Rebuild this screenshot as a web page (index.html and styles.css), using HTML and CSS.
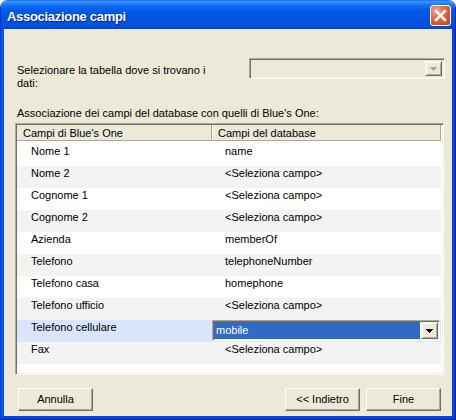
FILE: index.html
```html
<!DOCTYPE html>
<html lang="it">
<head>
<meta charset="utf-8">
<title>Associazione campi</title>
<link rel="stylesheet" href="styles.css">
</head>
<body>
<div class="window">
  <div class="titlebar">
    <span class="title">Associazione campi</span>
    <button class="close" aria-label="Chiudi">
      <svg width="19" height="19" viewBox="0 0 19 19"><path d="M5 5L14 14M14 5L5 14" stroke="#fff" stroke-width="2.6" stroke-linecap="square" fill="none"/></svg>
    </button>
  </div>
  <div class="client">
    <div class="select-row">
      <div class="select-label">Selezionare la tabella dove si trovano i dati:</div>
      <div class="combo disabled">
        <span class="combo-field"></span>
        <span class="combo-btn"><svg width="7" height="4" viewBox="0 0 7 4"><path d="M0 0h7v1H0zM1 1h5v1H1zM2 2h3v1H2zM3 3h1v1H3z" fill="#ACA899"/></svg></span>
      </div>
    </div>
    <div class="assoc-label">Associazione dei campi del database con quelli di Blue's One:</div>
    <div class="grid">
      <div class="grid-head">
        <div class="hcell c1">Campi di Blue's One</div>
        <div class="hcell c2">Campi del database</div>
      </div>
      <div class="grid-body">
        <div class="row"><div class="cell c1">Nome 1</div><div class="cell c2">name</div></div>
        <div class="row"><div class="cell c1">Nome 2</div><div class="cell c2">&lt;Seleziona campo&gt;</div></div>
        <div class="row"><div class="cell c1">Cognome 1</div><div class="cell c2">&lt;Seleziona campo&gt;</div></div>
        <div class="row"><div class="cell c1">Cognome 2</div><div class="cell c2">&lt;Seleziona campo&gt;</div></div>
        <div class="row"><div class="cell c1">Azienda</div><div class="cell c2">memberOf</div></div>
        <div class="row"><div class="cell c1">Telefono</div><div class="cell c2">telephoneNumber</div></div>
        <div class="row"><div class="cell c1">Telefono casa</div><div class="cell c2">homephone</div></div>
        <div class="row"><div class="cell c1">Telefono ufficio</div><div class="cell c2">&lt;Seleziona campo&gt;</div></div>
        <div class="row selected">
          <div class="cell c1">Telefono cellulare</div>
          <div class="cell c2 edit">
            <div class="combo edit-combo">
              <span class="combo-field sel">mobile</span>
              <span class="combo-btn"><svg width="7" height="4" viewBox="0 0 7 4"><path d="M0 0h7v1H0zM1 1h5v1H1zM2 2h3v1H2zM3 3h1v1H3z" fill="#000"/></svg></span>
            </div>
          </div>
        </div>
        <div class="row"><div class="cell c1">Fax</div><div class="cell c2">&lt;Seleziona campo&gt;</div></div>
      </div>
    </div>
    <div class="buttons">
      <button class="btn">Annulla</button>
      <span class="spacer"></span>
      <button class="btn">&lt;&lt; Indietro</button>
      <button class="btn">Fine</button>
    </div>
  </div>
</div>
</body>
</html>
```
FILE: styles.css
```css
* { box-sizing: border-box; }
html, body { margin: 0; padding: 0; background: #fff; }
body {
  font-family: "Liberation Sans", Arial, sans-serif;
  font-size: 11px;
  line-height: 13px;
  color: #000;
}
.window {
  width: 456px;
  height: 420px;
  display: flex;
  flex-direction: column;
  border-radius: 8px 8px 0 0;
  overflow: hidden;
  border-style: solid;
  border-width: 0 1px 1px 1px;
  border-color: #0831D9 #001EA0 #001EA0 #0831D9;
}
.titlebar {
  flex: none;
  height: 29px;
  display: flex;
  align-items: flex-start;
  padding: 0 4px 0 6px;
  background: linear-gradient(to bottom,
    #0A5AE6 0px, #3D95FF 1px, #2C88FC 3px, #1474F6 5px, #0864EC 8px,
    #0058E6 11px, #0054E3 18px, #0053E1 23px, #0050DC 26px, #0046D2 29px);
}
.title {
  font-weight: bold;
  font-size: 13px;
  letter-spacing: -0.3px;
  line-height: 16px;
  margin-top: 9px;
  color: #fff;
  text-shadow: 1px 1px 0 #0A1E8C;
}
.close {
  margin-left: auto;
  margin-top: 5px;
  width: 21px;
  height: 21px;
  padding: 0;
  border: 1px solid #fff;
  border-radius: 3px;
  background: radial-gradient(circle at 30% 25%, #F2A58C 0%, #E5714F 35%, #D5512C 70%, #C2401B 100%);
  display: flex;
  align-items: center;
  justify-content: center;
}
.close svg { display: block; }
.client {
  flex: 1;
  background: #ECE9D8;
  border-style: solid;
  border-width: 0 3px 3px 3px;
  border-color: #0055E5 #0046D6 #0046D6 #0058EE;
  display: flex;
  flex-direction: column;
}
.select-row {
  display: flex;
  height: 32px;
  margin: 29px 7px 0 13px;
}
.select-label {
  width: 196px;
  padding-top: 6px;
}
.combo {
  display: flex;
  height: 21px;
  border: 1px solid;
  border-color: #ACA899 #fff #fff #ACA899;
  box-shadow: inset 1px 1px #716F64, inset -1px -1px #F1EFE2;
  background: #fff;
}
.combo.disabled {
  margin-left: auto;
  width: 196px;
  padding: 2px;
  background: #ECE9D8;
}
.combo-field { flex: 1; }
.combo-btn {
  flex: none;
  width: 17px;
  background: #ECE9D8;
  border: 1px solid;
  border-color: #F1EFE2 #716F64 #716F64 #F1EFE2;
  box-shadow: inset 1px 1px #fff, inset -1px -1px #ACA899;
  display: flex;
  align-items: center;
  justify-content: center;
}
.combo-btn svg { display: block; }
.assoc-label {
  margin: 17px 0 0 13px;
}
.grid {
  margin: 3px 8px 0 11px;
  height: 252px;
  border: 1px solid;
  border-color: #ACA899 #fff #fff #ACA899;
  box-shadow: inset 1px 1px #716F64, inset -1px -1px #F1EFE2;
  padding: 1px;
  background: #fff;
}
.grid-head {
  display: flex;
  height: 16px;
  background: #ECE9D8;
  border-bottom: 1px solid #ACA899;
  margin-right: 1px;
}
.hcell {
  padding: 2px 0 0 6px;
  white-space: nowrap;
}
.hcell.c1 {
  width: 195px;
  border-right: 1px solid #ACA899;
}
.hcell.c2 {
  flex: 1;
  border-right: 1px solid #ACA899;
  box-shadow: inset 1px 0 #fff;
}
.grid-body {
  padding-top: 3px;
  margin-right: 1px;
}
.row {
  display: flex;
  height: 22px;
}
.row:nth-child(even) { background: #F3F3F3; }
.row.selected { background: #D8E5FA; }
.cell {
  padding: 1px 0 0 14px;
  white-space: nowrap;
}
.cell.c1 { width: 195px; }
.cell.c2 { flex: 1; padding-left: 13px; }
.cell.c2.edit { padding: 0; }
.edit-combo {
  width: 228px;
  padding: 1px;
}
.combo-field.sel {
  background: #316AC5;
  color: #fff;
  margin-right: 1px;
  padding: 2px 0 0 2px;
}
.buttons {
  display: flex;
  gap: 6px;
  margin: 13px 11px 0 14px;
}
.spacer { flex: 1; }
.btn {
  width: 75px;
  height: 23px;
  padding: 0;
  font: inherit;
  color: #000;
  background: #ECE9D8;
  border: 1px solid;
  border-color: #fff #716F64 #716F64 #fff;
  box-shadow: inset -1px -1px #ACA899;
}
```
